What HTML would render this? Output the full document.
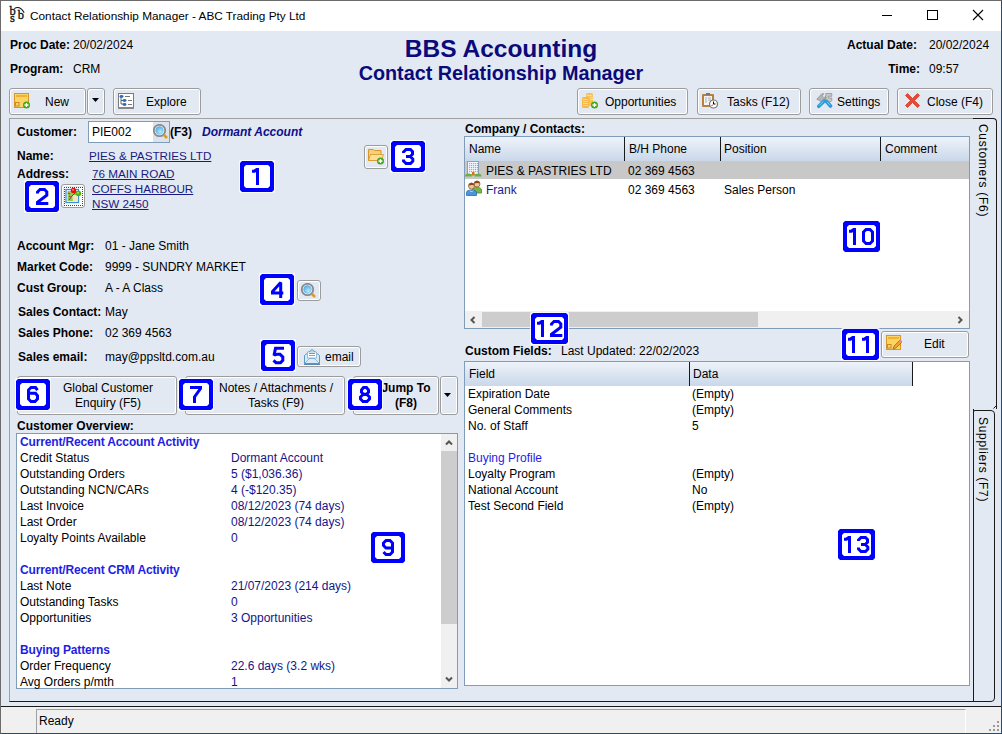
<!DOCTYPE html>
<html><head><meta charset="utf-8">
<style>
*{box-sizing:border-box;margin:0;padding:0}
html,body{width:1002px;height:734px;overflow:hidden;background:#e3e9f3;font-family:"Liberation Sans",sans-serif;font-size:12px;color:#000}
.a{position:absolute;white-space:nowrap}
.b{font-weight:bold}
#win{position:absolute;left:0;top:0;width:1002px;height:734px;border:1px solid #6b6b6b;border-right-color:#2c4a6e;border-bottom-color:#2c4a6e}
#title{position:absolute;left:1px;top:1px;width:1000px;height:30px;background:#fff}
.btn{position:absolute;border:1px solid #9c9c9c;border-radius:3px;background:#e3e9f3;box-shadow:inset 1px 1px 0 #fff,inset -1px -1px 0 #fff}
.lnk{color:#1a1a80;text-decoration:underline;font-size:11.7px}
.badge{position:absolute;border:4px solid #0000ff;background:#fff;color:#0000ff;font-size:24px;-webkit-text-stroke:0.7px #0000ff;text-align:center;line-height:23px;border-radius:3px;box-shadow:0 0 0 1px #fff}
.lb{position:absolute;background:#fff;border:1px solid #7f9db9}
.hdr{position:absolute;height:24px;background:linear-gradient(#eef3f9,#c9d8ea);}
.ov{position:absolute;left:20px;white-space:nowrap}
.ovv{position:absolute;left:231px;color:#14148a;white-space:nowrap}
.sec{color:#1e1ee6;font-weight:bold;font-size:12px;letter-spacing:-0.15px}
</style></head><body>
<div id="win"></div>
<div id="title"></div>
<!-- title bar -->
<div class="a" style="left:30px;top:9px;font-size:11.8px">Contact Relationship Manager - ABC Trading Pty Ltd</div>
<div class="a" style="left:882px;top:15px;width:10px;height:1px;background:#000"></div>
<div class="a" style="left:927px;top:10px;width:11px;height:10px;border:1px solid #000"></div>
<svg class="a" style="left:972px;top:9px" width="12" height="12"><path d="M1 1L11 11M11 1L1 11" stroke="#000" stroke-width="1.1"/></svg>

<!-- header -->
<div class="a b" style="left:10px;top:38px">Proc Date:</div>
<div class="a" style="left:73px;top:38px">20/02/2024</div>
<div class="a b" style="left:10px;top:62px">Program:</div>
<div class="a" style="left:73px;top:62px">CRM</div>
<div class="a b" style="left:0;width:1002px;text-align:center;top:35px;font-size:24.5px;color:#0a0a7a">BBS Accounting</div>
<div class="a b" style="left:0;width:1002px;text-align:center;top:62px;font-size:19.8px;color:#0a0a7a">Contact Relationship Manager</div>
<div class="a b" style="left:817px;width:100px;text-align:right;top:38px">Actual Date:</div>
<div class="a" style="left:929px;top:38px">20/02/2024</div>
<div class="a b" style="left:820px;width:100px;text-align:right;top:62px">Time:</div>
<div class="a" style="left:929px;top:62px">09:57</div>

<!-- toolbar -->
<div class="btn" style="left:9px;top:88px;width:77px;height:27px"></div>
<div class="a" style="left:45px;top:95px">New</div>
<div class="btn" style="left:87px;top:88px;width:18px;height:27px"></div>
<div class="btn" style="left:113px;top:88px;width:88px;height:27px"></div>
<div class="a" style="left:146px;top:95px">Explore</div>
<div class="btn" style="left:577px;top:88px;width:111px;height:27px"></div>
<div class="a" style="left:605px;top:95px">Opportunities</div>
<div class="btn" style="left:697px;top:88px;width:104px;height:27px"></div>
<div class="a" style="left:727px;top:95px">Tasks (F12)</div>
<div class="btn" style="left:809px;top:88px;width:80px;height:27px"></div>
<div class="a" style="left:837px;top:95px">Settings</div>
<div class="btn" style="left:897px;top:88px;width:96px;height:27px"></div>
<div class="a" style="left:927px;top:95px">Close (F4)</div>

<!-- main panel -->
<div class="a" style="left:9px;top:118px;width:965px;height:584px;border:1px solid #1a1a1a;border-left-color:#a0a0a0;border-top-color:#a0a0a0"></div>


<!-- LEFT PANEL -->
<div class="a b" style="left:17px;top:125px">Customer:</div>
<div class="a" style="left:88px;top:121px;width:82px;height:22px;background:#fff;border:1px solid #7f9db9"></div>
<div class="a" style="left:153px;top:122px;width:16px;height:20px;background:#dde3ec"></div>
<div class="a" style="left:92px;top:125px">PIE002</div>
<div class="a b" style="left:170px;top:125px">(F3)</div>
<div class="a b" style="left:202px;top:125px;font-style:italic;color:#0e0e8c">Dormant Account</div>
<div class="a b" style="left:17px;top:149px">Name:</div>
<div class="a lnk" style="left:89px;top:149px">PIES &amp; PASTRIES LTD</div>
<div class="a b" style="left:17px;top:167px">Address:</div>
<div class="a lnk" style="left:92px;top:167px">76 MAIN ROAD</div>
<div class="a lnk" style="left:92px;top:182px">COFFS HARBOUR</div>
<div class="a lnk" style="left:92px;top:197px">NSW 2450</div>

<div class="a b" style="left:17px;top:239px">Account Mgr:</div>
<div class="a" style="left:105px;top:239px">01 - Jane Smith</div>
<div class="a b" style="left:17px;top:260px">Market Code:</div>
<div class="a" style="left:105px;top:260px">9999 - SUNDRY MARKET</div>
<div class="a b" style="left:17px;top:281px">Cust Group:</div>
<div class="a" style="left:105px;top:281px">A - A Class</div>
<div class="a b" style="left:18px;top:305px">Sales Contact:</div>
<div class="a" style="left:105px;top:305px">May</div>
<div class="a b" style="left:18px;top:326px">Sales Phone:</div>
<div class="a" style="left:105px;top:326px">02 369 4563</div>
<div class="a b" style="left:18px;top:350px">Sales email:</div>
<div class="a" style="left:105px;top:350px">may@ppsltd.com.au</div>

<div class="btn" style="left:297px;top:280px;width:24px;height:21px"></div>
<div class="btn" style="left:297px;top:346px;width:64px;height:21px"></div>
<div class="a" style="left:325px;top:350px">email</div>
<div class="btn" style="left:364px;top:145px;width:24px;height:24px"></div>
<div class="btn" style="left:61px;top:184px;width:24px;height:24px"></div>

<div class="btn" style="left:17px;top:376px;width:160px;height:39px"></div>
<div class="a" style="left:17px;width:182px;text-align:center;top:381px;line-height:15px">Global Customer<br>Enquiry (F5)</div>
<div class="btn" style="left:185px;top:376px;width:160px;height:39px"></div>
<div class="a" style="left:185px;width:182px;text-align:center;top:381px;line-height:15px">Notes / Attachments /<br>Tasks (F9)</div>
<div class="btn" style="left:353px;top:376px;width:86px;height:39px"></div>
<div class="a b" style="left:370px;width:72px;text-align:center;top:381px;line-height:15px">Jump To<br>(F8)</div>
<div class="btn" style="left:440px;top:376px;width:18px;height:39px"></div>

<div class="a b" style="left:17px;top:419px">Customer Overview:</div>
<div class="lb" style="left:16px;top:433px;width:442px;height:256px"></div>
<div class="a" style="left:441px;top:434px;width:16px;height:254px;background:#f0f0f0"></div>
<div class="a" style="left:441px;top:451px;width:16px;height:173px;background:#cdcdcd"></div>
<div class="a" style="left:0px;top:434px;font-size:12px;line-height:16px">
<div class="ov sec" style="top:0">Current/Recent Account Activity</div>
<div class="ov" style="top:16px">Credit Status</div>
<div class="ov" style="top:32px">Outstanding Orders</div>
<div class="ov" style="top:48px">Outstanding NCN/CARs</div>
<div class="ov" style="top:64px">Last Invoice</div>
<div class="ov" style="top:80px">Last Order</div>
<div class="ov" style="top:96px">Loyalty Points Available</div>
<div class="ov sec" style="top:128px">Current/Recent CRM Activity</div>
<div class="ov" style="top:144px">Last Note</div>
<div class="ov" style="top:160px">Outstanding Tasks</div>
<div class="ov" style="top:176px">Opportunities</div>
<div class="ov sec" style="top:208px">Buying Patterns</div>
<div class="ov" style="top:224px">Order Frequency</div>
<div class="ov" style="top:240px">Avg Orders p/mth</div>
</div>
<div class="a" style="left:0;top:434px;font-size:12px;line-height:16px">
<div class="ovv" style="top:16px">Dormant Account</div>
<div class="ovv" style="top:32px">5 ($1,036.36)</div>
<div class="ovv" style="top:48px">4 (-$120.35)</div>
<div class="ovv" style="top:64px">08/12/2023 (74 days)</div>
<div class="ovv" style="top:80px">08/12/2023 (74 days)</div>
<div class="ovv" style="top:96px">0</div>
<div class="ovv" style="top:144px">21/07/2023 (214 days)</div>
<div class="ovv" style="top:160px">0</div>
<div class="ovv" style="top:176px">3 Opportunities</div>
<div class="ovv" style="top:224px">22.6 days (3.2 wks)</div>
<div class="ovv" style="top:240px">1</div>
</div>

<!-- RIGHT PANEL -->
<div class="a b" style="left:465px;top:122px">Company / Contacts:</div>
<div class="lb" style="left:464px;top:136px;width:506px;height:193px"></div>
<div class="hdr" style="left:465px;top:137px;width:504px"></div>
<div class="a" style="left:624px;top:137px;width:1px;height:24px;background:#1a1a1a"></div>
<div class="a" style="left:720px;top:137px;width:1px;height:24px;background:#1a1a1a"></div>
<div class="a" style="left:880px;top:137px;width:1px;height:24px;background:#1a1a1a"></div>
<div class="a" style="left:469px;top:142px">Name</div>
<div class="a" style="left:629px;top:142px">B/H Phone</div>
<div class="a" style="left:724px;top:142px">Position</div>
<div class="a" style="left:885px;top:142px">Comment</div>
<div class="a" style="left:465px;top:161px;width:504px;height:18px;background:#c8c8c8"></div>
<div class="a" style="left:486px;top:164px">PIES &amp; PASTRIES LTD</div>
<div class="a" style="left:628px;top:164px">02 369 4563</div>
<div class="a" style="left:486px;top:183px;color:#1a1a8a">Frank</div>
<div class="a" style="left:628px;top:183px">02 369 4563</div>
<div class="a" style="left:724px;top:183px">Sales Person</div>
<div class="a" style="left:465px;top:311px;width:504px;height:17px;background:#f0f0f0"></div>
<div class="a" style="left:482px;top:312px;width:276px;height:15px;background:#cdcdcd"></div>

<div class="a b" style="left:465px;top:344px">Custom Fields:</div>
<div class="a" style="left:561px;top:344px">Last Updated: 22/02/2023</div>
<div class="btn" style="left:881px;top:331px;width:88px;height:27px"></div>
<div class="a" style="left:924px;top:337px">Edit</div>
<div class="lb" style="left:464px;top:361px;width:506px;height:325px"></div>
<div class="hdr" style="left:465px;top:362px;width:447px;height:24px"></div>
<div class="a" style="left:689px;top:362px;width:1px;height:24px;background:#1a1a1a"></div>
<div class="a" style="left:912px;top:362px;width:1px;height:24px;background:#1a1a1a"></div>
<div class="a" style="left:469px;top:367px">Field</div>
<div class="a" style="left:693px;top:367px">Data</div>
<div class="a" style="left:468px;top:386px;line-height:16px">Expiration Date<br>General Comments<br>No. of Staff<br><br><span style="color:#1e1ee6">Buying Profile</span><br>Loyalty Program<br>National Account<br>Test Second Field</div>
<div class="a" style="left:692px;top:386px;line-height:16px">(Empty)<br>(Empty)<br>5<br><br><br>(Empty)<br>No<br>(Empty)</div>


<!-- tabs -->
<div class="a" style="left:973px;top:118px;width:24px;height:291px;border:1px solid #1a1a1a;border-left:none;border-bottom:none;border-radius:0 4px 0 0;background:#e3e9f3"></div><svg class="a" style="left:993px;top:404px" width="4" height="5"><path d="M3.5 0v1.5L0.5 4.5" stroke="#1a1a1a" fill="none"/></svg>
<div class="a" style="left:975px;top:124px;width:16px;height:92px;writing-mode:vertical-rl;font-size:12px;line-height:16px;letter-spacing:0.7px">Customers (F6)</div>
<div class="a" style="left:973px;top:410px;width:22px;height:292px;border:1px solid #1a1a1a;border-top-left-radius:2px;border-top-right-radius:4px;border-bottom-right-radius:4px"></div>
<div class="a" style="left:975px;top:417px;width:16px;height:84px;writing-mode:vertical-rl;font-size:12px;line-height:16px;letter-spacing:0.7px">Suppliers (F7)</div>
<!-- status bar -->
<div class="a" style="left:1px;top:706px;width:1000px;height:1px;background:#1a1a1a"></div>
<div class="a" style="left:1px;top:707px;width:1000px;height:26px;background:#f0f0f0"></div>
<div class="a" style="left:36px;top:709px;width:930px;height:24px;border-left:1px solid #a0a0a0;border-top:1px solid #a0a0a0;border-right:1px solid #fff"></div>
<div class="a" style="left:39px;top:714px">Ready</div>

<!-- ICONS -->
<!-- app icon -->
<svg class="a" style="left:6px;top:4px" width="24" height="22" viewBox="0 0 24 22"><g font-family="Liberation Serif" font-size="12.5" fill="#111" stroke="#111" stroke-width=".35"><text x="3.6" y="10.9">b</text><text x="11.7" y="15">b</text><text x="4.1" y="18.2">s</text></g><path d="M8.3 4.6Q13.5 1 18.2 8.6" stroke="#111" stroke-width="1.1" fill="none"/></svg>
<!-- New -->
<svg class="a" style="left:14px;top:93px" width="16" height="16" viewBox="0 0 16 16"><rect x="0.5" y="0.5" width="14" height="14" fill="#fcd462" stroke="#d8962a"/><rect x="2" y="2" width="11" height="2" fill="#f0b234"/><rect x="1.5" y="9.5" width="3.5" height="3.5" fill="none" stroke="#c88a2a"/><circle cx="12.5" cy="12" r="3.5" fill="#48a818"/><path d="M12.5 10v4M10.5 12h4" stroke="#fff" stroke-width="1.3"/></svg>
<svg class="a" style="left:92px;top:98px" width="7" height="4"><path d="M0 0h7L3.5 4z" fill="#000"/></svg>
<!-- Explore -->
<svg class="a" style="left:118px;top:93px" width="16" height="16" viewBox="0 0 16 16"><rect x="0.5" y="0.5" width="15" height="15" fill="#fff" stroke="#7a7a7a"/><rect x="0" y="14" width="16" height="2" fill="#888"/><path d="M3 4v7h2M3 7.5h2" stroke="#444" fill="none" stroke-width=".8"/><ellipse cx="3.5" cy="3.5" rx="2" ry="1.4" fill="#2a6cc0"/><ellipse cx="6.5" cy="7.5" rx="2" ry="1.4" fill="#2a6cc0"/><ellipse cx="6.5" cy="11.5" rx="2" ry="1.4" fill="#2a6cc0"/><path d="M7 3.5h5M10 7.5h4M10 11.5h4" stroke="#777" stroke-width="1"/></svg>
<!-- Opportunities -->
<svg class="a" style="left:582px;top:93px" width="16" height="16" viewBox="0 0 16 16"><rect x="4" y="0" width="7" height="13" rx="1.5" fill="#f6c25a"/><rect x="0" y="4" width="7" height="11" rx="1.5" fill="#f4b848"/><path d="M1 6.5h5M1 8.5h5M1 10.5h5M1 12.5h5M5 2.5h5M8 4.5h3M8 6.5h3" stroke="#fde5a0" stroke-width=".8"/><circle cx="12.5" cy="12" r="3.5" fill="#48a818"/><path d="M12.5 10v4M10.5 12h4" stroke="#fff" stroke-width="1.3"/></svg>
<!-- Tasks -->
<svg class="a" style="left:702px;top:93px" width="16" height="16" viewBox="0 0 16 16"><rect x="0" y="1" width="12" height="13" rx="1" fill="#b8803e"/><rect x="2" y="3" width="8" height="9" fill="#f4f4f4"/><rect x="4" y="0" width="4" height="2" fill="#777"/><path d="M3 5h2M3 7h2M3 9h2M6 5h3M6 7h3" stroke="#999" stroke-width=".8"/><circle cx="11.5" cy="11" r="4" fill="#fff" stroke="#777" stroke-width="1.2"/><path d="M11.5 8.5v2.5h2" stroke="#000" stroke-width="1" fill="none"/><path d="M9.5 13l1.5-1.5" stroke="#e00" stroke-width="1"/></svg>
<!-- Settings -->
<svg class="a" style="left:816px;top:92px" width="17" height="17" viewBox="0 0 17 17"><path d="M0.8 7.2L5.5 2 7.8 1.5 6.3 4 7.8 5.6 9.8 4.6 9.3 7.3 6 10z" fill="#b4b4b4" stroke="#8c8c8c" stroke-width=".7"/><path d="M9.8 1.5H15.8V4.3H12.4V6H15.8V8.8L13.6 10H10.8L9.8 8.6z" fill="#c8c8c8" stroke="#8c8c8c" stroke-width=".7"/><path d="M2.8 14.3L8.2 8.9M10.3 9.3L14.5 14" stroke="#2e9ad8" stroke-width="3.6" stroke-linecap="round"/><path d="M3.2 13.6L7.4 9.4M11 9.8L14 13.2" stroke="#9ad4f4" stroke-width=".8"/></svg>
<!-- Close -->
<svg class="a" style="left:905px;top:93px" width="15" height="15" viewBox="0 0 15 15"><path d="M2.5 0.5L7.5 5.5 12.5 0.5 14.5 2.5 9.5 7.5 14.5 12.5 12.5 14.5 7.5 9.5 2.5 14.5 0.5 12.5 5.5 7.5 0.5 2.5z" fill="#ea4a32" stroke="#d23a22" stroke-width=".8"/></svg>
<!-- input magnifier -->
<svg class="a" style="left:153px;top:124px" width="16" height="16" viewBox="0 0 16 16"><defs><radialGradient id="mg" cx=".6" cy=".65" r=".7"><stop offset="0" stop-color="#b4ecfa"/><stop offset="1" stop-color="#4aa4e8"/></radialGradient></defs><circle cx="6.5" cy="6.5" r="5.7" fill="#fff" stroke="#8a8a8a" stroke-width="1.8"/><circle cx="6.5" cy="6.5" r="4.2" fill="url(#mg)"/><path d="M11 11l3 3" stroke="#e09a20" stroke-width="2.6"/></svg>
<!-- map button icon -->
<svg class="a" style="left:63px;top:186px" width="21" height="21" viewBox="0 0 21 21"><rect x="1" y="1" width="19" height="19" fill="#fff"/><g fill="#6a3a1a"><rect x="1" y="1" width="1" height="1"/><rect x="1" y="19" width="1" height="1"/><rect x="1" y="1" width="1" height="1"/><rect x="19" y="1" width="1" height="1"/><rect x="3" y="1" width="1" height="1"/><rect x="3" y="19" width="1" height="1"/><rect x="1" y="3" width="1" height="1"/><rect x="19" y="3" width="1" height="1"/><rect x="5" y="1" width="1" height="1"/><rect x="5" y="19" width="1" height="1"/><rect x="1" y="5" width="1" height="1"/><rect x="19" y="5" width="1" height="1"/><rect x="7" y="1" width="1" height="1"/><rect x="7" y="19" width="1" height="1"/><rect x="1" y="7" width="1" height="1"/><rect x="19" y="7" width="1" height="1"/><rect x="9" y="1" width="1" height="1"/><rect x="9" y="19" width="1" height="1"/><rect x="1" y="9" width="1" height="1"/><rect x="19" y="9" width="1" height="1"/><rect x="11" y="1" width="1" height="1"/><rect x="11" y="19" width="1" height="1"/><rect x="1" y="11" width="1" height="1"/><rect x="19" y="11" width="1" height="1"/><rect x="13" y="1" width="1" height="1"/><rect x="13" y="19" width="1" height="1"/><rect x="1" y="13" width="1" height="1"/><rect x="19" y="13" width="1" height="1"/><rect x="15" y="1" width="1" height="1"/><rect x="15" y="19" width="1" height="1"/><rect x="1" y="15" width="1" height="1"/><rect x="19" y="15" width="1" height="1"/><rect x="17" y="1" width="1" height="1"/><rect x="17" y="19" width="1" height="1"/><rect x="1" y="17" width="1" height="1"/><rect x="19" y="17" width="1" height="1"/><rect x="19" y="1" width="1" height="1"/><rect x="19" y="19" width="1" height="1"/><rect x="1" y="19" width="1" height="1"/><rect x="19" y="19" width="1" height="1"/></g><rect x="3" y="3.5" width="12.5" height="13" fill="#fff" stroke="#3a90d8" stroke-width="1.3"/><rect x="4.5" y="5" width="9.5" height="10" fill="#94cc50"/><path d="M9 9l5 0 0 6-4 0z" fill="#f4e4c0"/><path d="M5 7l2 1M6 10l1.5 1" stroke="#e82020" stroke-width="1.2"/><path d="M6 14l3-4 3-3 4-2" stroke="#555" stroke-width="1" fill="none"/><circle cx="10.5" cy="4.5" r="2.7" fill="#e81010"/><circle cx="10" cy="3.8" r=".9" fill="#ff9a9a"/><circle cx="15.5" cy="7.5" r="2.7" fill="#58b010"/><circle cx="15" cy="6.8" r=".9" fill="#b8f080"/></svg>
<!-- folder -->
<svg class="a" style="left:368px;top:148px" width="17" height="17" viewBox="0 0 17 17"><path d="M0.5 1.5h5l1 1h6.5v10h-12.5z" fill="#f6d078" stroke="#d8962a"/><path d="M2.5 6.5h13l-2 6h-13z" fill="#fbe09a" stroke="#d8962a" stroke-width=".8"/><circle cx="12.5" cy="13" r="3.5" fill="#48a818"/><path d="M12.5 11v4M10.5 13h4" stroke="#fff" stroke-width="1.3"/></svg>
<!-- search btn -->
<svg class="a" style="left:301px;top:283px" width="16" height="16" viewBox="0 0 16 16"><circle cx="6.5" cy="6.5" r="5.7" fill="#fff" stroke="#8a8a8a" stroke-width="1.8"/><circle cx="6.5" cy="6.5" r="4.2" fill="url(#mg)"/><path d="M11 11l3 3" stroke="#e09a20" stroke-width="2.6"/></svg>
<!-- email -->
<svg class="a" style="left:304px;top:349px" width="16" height="16" viewBox="0 0 16 16"><path d="M0.5 6.5l7.5-6 7.5 6v8h-15z" fill="#d8ecf8" stroke="#5a9ac8"/><rect x="3.5" y="3" width="9" height="6" fill="#fff" stroke="#7aa8c8" stroke-width=".7"/><path d="M5 4.5h6" stroke="#9aa020" stroke-width="1"/><path d="M5 6.5h6" stroke="#a08060" stroke-width=".8"/><path d="M1 14l5-5M15 14l-5-5M6 9.5h4" stroke="#7aa8c8" stroke-width=".8"/><rect x="0" y="14.5" width="16" height="1.5" fill="#5a8ab8"/></svg>
<!-- edit -->
<svg class="a" style="left:886px;top:335px" width="16" height="16" viewBox="0 0 16 16"><rect x="0.5" y="0.5" width="14" height="14" fill="#fcd462" stroke="#d8962a"/><rect x="2" y="2" width="11" height="2" fill="#f0b234"/><rect x="1.5" y="9.5" width="3.5" height="3.5" fill="none" stroke="#c88a2a"/><path d="M7 14l1-3 6-6 2 2-6 6z" fill="#f0a030" stroke="#8a5a20" stroke-width=".6"/><path d="M14 5l2 2" stroke="#e080c0" stroke-width="1.5"/></svg>
<!-- building -->
<svg class="a" style="left:465px;top:161px" width="17" height="16" viewBox="0 0 17 16"><rect x="2.5" y="0.5" width="11" height="13" fill="#f4f8fc" stroke="#8aa0b4"/><g fill="#8cb0d4"><rect x="4" y="2" width="1.2" height="1.2"/><rect x="6" y="2" width="1.2" height="1.2"/><rect x="8" y="2" width="1.2" height="1.2"/><rect x="10" y="2" width="1.2" height="1.2"/><rect x="12" y="2" width="1.2" height="1.2"/><rect x="4" y="4" width="1.2" height="1.2"/><rect x="6" y="4" width="1.2" height="1.2"/><rect x="8" y="4" width="1.2" height="1.2"/><rect x="10" y="4" width="1.2" height="1.2"/><rect x="12" y="4" width="1.2" height="1.2"/><rect x="4" y="6" width="1.2" height="1.2"/><rect x="6" y="6" width="1.2" height="1.2"/><rect x="8" y="6" width="1.2" height="1.2"/><rect x="10" y="6" width="1.2" height="1.2"/><rect x="12" y="6" width="1.2" height="1.2"/><rect x="4" y="8" width="1.2" height="1.2"/><rect x="6" y="8" width="1.2" height="1.2"/><rect x="8" y="8" width="1.2" height="1.2"/><rect x="10" y="8" width="1.2" height="1.2"/><rect x="12" y="8" width="1.2" height="1.2"/><rect x="4" y="10" width="1.2" height="1.2"/><rect x="6" y="10" width="1.2" height="1.2"/><rect x="8" y="10" width="1.2" height="1.2"/><rect x="10" y="10" width="1.2" height="1.2"/><rect x="12" y="10" width="1.2" height="1.2"/></g><rect x="7" y="11" width="2.5" height="3.5" fill="#d07818"/><path d="M0 15.5Q0 12.5 3.5 12.5T7 15.5zM9.5 15.5Q9.5 12.5 13 12.5T16.5 15.5z" fill="#6ab040"/></svg>
<!-- persons -->
<svg class="a" style="left:466px;top:180px" width="17" height="16" viewBox="0 0 17 16"><circle cx="11" cy="4" r="3" fill="#f0c898" stroke="#8a5a30" stroke-width=".8"/><path d="M8 3.5Q8.5 0.8 11 0.8T14 3.5Q12 2.5 8 3.5z" fill="#8a4a18"/><path d="M6.5 13v-3q0-2.5 4.5-2.5t4.5 2.5v3z" fill="#78b848" stroke="#4a8a28" stroke-width=".8"/><circle cx="5.5" cy="6" r="3" fill="#f0c898" stroke="#8a5a30" stroke-width=".8"/><path d="M2.5 5.5Q3 2.8 5.5 2.8T8.5 5.5Q6.5 4.5 2.5 5.5z" fill="#8a4a18"/><path d="M0.5 15.5v-3q0-2.5 5-2.5t5 2.5v3z" fill="#4a94d8" stroke="#2a6ab0" stroke-width=".8"/><path d="M4 10.5l1.5 1.5 1.5-1.5" stroke="#fff" stroke-width=".8" fill="none"/></svg>
<!-- overview scroll arrows -->
<svg class="a" style="left:445px;top:439px" width="8" height="7"><path d="M1 5.5l3-3 3 3" stroke="#555" stroke-width="2" fill="none"/></svg>
<svg class="a" style="left:445px;top:676px" width="8" height="7"><path d="M1 1.5l3 3 3-3" stroke="#555" stroke-width="2" fill="none"/></svg>
<svg class="a" style="left:469px;top:316px" width="7" height="8"><path d="M5.5 1l-3 3 3 3" stroke="#555" stroke-width="2" fill="none"/></svg>
<svg class="a" style="left:957px;top:316px" width="7" height="8"><path d="M1.5 1l3 3-3 3" stroke="#555" stroke-width="2" fill="none"/></svg>
<svg class="a" style="left:444px;top:393px" width="7" height="4"><path d="M0 0h7L3.5 4z" fill="#000"/></svg>
<!-- grip -->
<svg class="a" style="left:989px;top:720px" width="12" height="12"><g fill="#9a9a9a"><rect x="8" y="1" width="2" height="2"/><rect x="4" y="5" width="2" height="2"/><rect x="8" y="5" width="2" height="2"/><rect x="0" y="9" width="2" height="2"/><rect x="4" y="9" width="2" height="2"/><rect x="8" y="9" width="2" height="2"/></g></svg>
<!-- badges -->
<svg class="a" style="left:239px;top:160px" width="36" height="33" viewBox="-1 -1 36 33"><rect x="-1" y="-1" width="36" height="33" rx="2" fill="#fff" opacity=".85"/><rect x="4" y="4" width="26" height="23" fill="#fff"/><path d="M2 0H32L34 2V29L32 31H2L0 29V2ZM6 4H28L30 6V25L28 27H6L4 25V6Z" fill="#0000ff" fill-rule="evenodd"/><g fill="none" stroke="#0000ff" stroke-width="3" stroke-linejoin="miter" stroke-miterlimit="2"><path transform="translate(12,7)" d="M0 3.2H2.5L4.5 1.5M5.5 0V17"/></g></svg>
<svg class="a" style="left:24px;top:180px" width="36" height="33" viewBox="-1 -1 36 33"><rect x="-1" y="-1" width="36" height="33" rx="2" fill="#fff" opacity=".85"/><rect x="4" y="4" width="26" height="23" fill="#fff"/><path d="M2 0H32L34 2V29L32 31H2L0 29V2ZM6 4H28L30 6V25L28 27H6L4 25V6Z" fill="#0000ff" fill-rule="evenodd"/><g fill="none" stroke="#0000ff" stroke-width="3" stroke-linejoin="miter" stroke-miterlimit="2"><path transform="translate(11,7)" d="M1.5 5.5V4L4 1.5H8.5L10.8 3.8V7.3L1.5 14.2V15.5H12.3"/></g></svg>
<svg class="a" style="left:390px;top:140px" width="36" height="33" viewBox="-1 -1 36 33"><rect x="-1" y="-1" width="36" height="33" rx="2" fill="#fff" opacity=".85"/><rect x="4" y="4" width="26" height="23" fill="#fff"/><path d="M2 0H32L34 2V29L32 31H2L0 29V2ZM6 4H28L30 6V25L28 27H6L4 25V6Z" fill="#0000ff" fill-rule="evenodd"/><g fill="none" stroke="#0000ff" stroke-width="3" stroke-linejoin="miter" stroke-miterlimit="2"><path transform="translate(11,7)" d="M1.5 5V4L4 1.5H8.5L10.5 3.5V6.2L8.3 8.5H4M8.3 8.5L10.8 11V13.2L8.5 15.5H4L1.5 13V11.5"/></g></svg>
<svg class="a" style="left:259px;top:273px" width="36" height="33" viewBox="-1 -1 36 33"><rect x="-1" y="-1" width="36" height="33" rx="2" fill="#fff" opacity=".85"/><rect x="4" y="4" width="26" height="23" fill="#fff"/><path d="M2 0H32L34 2V29L32 31H2L0 29V2ZM6 4H28L30 6V25L28 27H6L4 25V6Z" fill="#0000ff" fill-rule="evenodd"/><g fill="none" stroke="#0000ff" stroke-width="3" stroke-linejoin="miter" stroke-miterlimit="2"><path transform="translate(11,7)" d="M9.7 17V1.5L1.5 10.5V12H12.3"/></g></svg>
<svg class="a" style="left:260px;top:339px" width="36" height="33" viewBox="-1 -1 36 33"><rect x="-1" y="-1" width="36" height="33" rx="2" fill="#fff" opacity=".85"/><rect x="4" y="4" width="26" height="23" fill="#fff"/><path d="M2 0H32L34 2V29L32 31H2L0 29V2ZM6 4H28L30 6V25L28 27H6L4 25V6Z" fill="#0000ff" fill-rule="evenodd"/><g fill="none" stroke="#0000ff" stroke-width="3" stroke-linejoin="miter" stroke-miterlimit="2"><path transform="translate(11,7)" d="M12 1.3H3.5L2 8.5Q3 7.3 5.5 7.3H8L10.8 10V13.3L8.5 15.7H4L1.5 13.3"/></g></svg>
<svg class="a" style="left:15px;top:378px" width="36" height="33" viewBox="-1 -1 36 33"><rect x="-1" y="-1" width="36" height="33" rx="2" fill="#fff" opacity=".85"/><rect x="4" y="4" width="26" height="23" fill="#fff"/><path d="M2 0H32L34 2V29L32 31H2L0 29V2ZM6 4H28L30 6V25L28 27H6L4 25V6Z" fill="#0000ff" fill-rule="evenodd"/><g fill="none" stroke="#0000ff" stroke-width="3" stroke-linejoin="miter" stroke-miterlimit="2"><path transform="translate(11,7)" d="M10.5 4.2L8.5 1.5H4L1.5 4V13L4 15.5H8L10.5 13V9.7L8.5 7.3H2"/></g></svg>
<svg class="a" style="left:178px;top:378px" width="36" height="33" viewBox="-1 -1 36 33"><rect x="-1" y="-1" width="36" height="33" rx="2" fill="#fff" opacity=".85"/><rect x="4" y="4" width="26" height="23" fill="#fff"/><path d="M2 0H32L34 2V29L32 31H2L0 29V2ZM6 4H28L30 6V25L28 27H6L4 25V6Z" fill="#0000ff" fill-rule="evenodd"/><g fill="none" stroke="#0000ff" stroke-width="3" stroke-linejoin="miter" stroke-miterlimit="2"><path transform="translate(11,7)" d="M0 1.5H10.5V2.5L4.5 11V17"/></g></svg>
<svg class="a" style="left:347px;top:378px" width="36" height="33" viewBox="-1 -1 36 33"><rect x="-1" y="-1" width="36" height="33" rx="2" fill="#fff" opacity=".85"/><rect x="4" y="4" width="26" height="23" fill="#fff"/><path d="M2 0H32L34 2V29L32 31H2L0 29V2ZM6 4H28L30 6V25L28 27H6L4 25V6Z" fill="#0000ff" fill-rule="evenodd"/><g fill="none" stroke="#0000ff" stroke-width="3" stroke-linejoin="miter" stroke-miterlimit="2"><path transform="translate(11,7)" d="M4.5 8.2L2.5 6.2V4L4.5 1.5H7.5L9.5 4V6.2L7.5 8.2ZM4 8.5L1.5 11V13L4 15.5H8L10.5 13V11L8 8.5Z"/></g></svg>
<svg class="a" style="left:370px;top:531px" width="36" height="33" viewBox="-1 -1 36 33"><rect x="-1" y="-1" width="36" height="33" rx="2" fill="#fff" opacity=".85"/><rect x="4" y="4" width="26" height="23" fill="#fff"/><path d="M2 0H32L34 2V29L32 31H2L0 29V2ZM6 4H28L30 6V25L28 27H6L4 25V6Z" fill="#0000ff" fill-rule="evenodd"/><g fill="none" stroke="#0000ff" stroke-width="3" stroke-linejoin="miter" stroke-miterlimit="2"><path transform="translate(11,7)" d="M1.5 13L4 15.5H8L10.5 13V4L8 1.5H4L1.5 4V6.5L4 9H10"/></g></svg>
<svg class="a" style="left:842px;top:220px" width="39" height="33" viewBox="-1 -1 39 33"><rect x="-1" y="-1" width="39" height="33" rx="2" fill="#fff" opacity=".85"/><rect x="4" y="4" width="29" height="23" fill="#fff"/><path d="M2 0H35L37 2V29L35 31H2L0 29V2ZM6 4H31L33 6V25L31 27H6L4 25V6Z" fill="#0000ff" fill-rule="evenodd"/><g fill="none" stroke="#0000ff" stroke-width="3" stroke-linejoin="miter" stroke-miterlimit="2"><path transform="translate(6,7)" d="M0 3.2H2.5L4.5 1.5M5.5 0V17"/><path transform="translate(19,7)" d="M4 1.5H8L10.5 4V13L8 15.5H4L1.5 13V4Z"/></g></svg>
<svg class="a" style="left:841px;top:328px" width="39" height="33" viewBox="-1 -1 39 33"><rect x="-1" y="-1" width="39" height="33" rx="2" fill="#fff" opacity=".85"/><rect x="4" y="4" width="29" height="23" fill="#fff"/><path d="M2 0H35L37 2V29L35 31H2L0 29V2ZM6 4H31L33 6V25L31 27H6L4 25V6Z" fill="#0000ff" fill-rule="evenodd"/><g fill="none" stroke="#0000ff" stroke-width="3" stroke-linejoin="miter" stroke-miterlimit="2"><path transform="translate(6,7)" d="M0 3.2H2.5L4.5 1.5M5.5 0V17"/><path transform="translate(20,7)" d="M0 3.2H2.5L4.5 1.5M5.5 0V17"/></g></svg>
<svg class="a" style="left:530px;top:312px" width="39" height="33" viewBox="-1 -1 39 33"><rect x="-1" y="-1" width="39" height="33" rx="2" fill="#fff" opacity=".85"/><rect x="4" y="4" width="29" height="23" fill="#fff"/><path d="M2 0H35L37 2V29L35 31H2L0 29V2ZM6 4H31L33 6V25L31 27H6L4 25V6Z" fill="#0000ff" fill-rule="evenodd"/><g fill="none" stroke="#0000ff" stroke-width="3" stroke-linejoin="miter" stroke-miterlimit="2"><path transform="translate(6,7)" d="M0 3.2H2.5L4.5 1.5M5.5 0V17"/><path transform="translate(19,7)" d="M1.5 5.5V4L4 1.5H8.5L10.8 3.8V7.3L1.5 14.2V15.5H12.3"/></g></svg>
<svg class="a" style="left:837px;top:528px" width="39" height="33" viewBox="-1 -1 39 33"><rect x="-1" y="-1" width="39" height="33" rx="2" fill="#fff" opacity=".85"/><rect x="4" y="4" width="29" height="23" fill="#fff"/><path d="M2 0H35L37 2V29L35 31H2L0 29V2ZM6 4H31L33 6V25L31 27H6L4 25V6Z" fill="#0000ff" fill-rule="evenodd"/><g fill="none" stroke="#0000ff" stroke-width="3" stroke-linejoin="miter" stroke-miterlimit="2"><path transform="translate(6,7)" d="M0 3.2H2.5L4.5 1.5M5.5 0V17"/><path transform="translate(19,7)" d="M1.5 5V4L4 1.5H8.5L10.5 3.5V6.2L8.3 8.5H4M8.3 8.5L10.8 11V13.2L8.5 15.5H4L1.5 13V11.5"/></g></svg>
</body></html>
